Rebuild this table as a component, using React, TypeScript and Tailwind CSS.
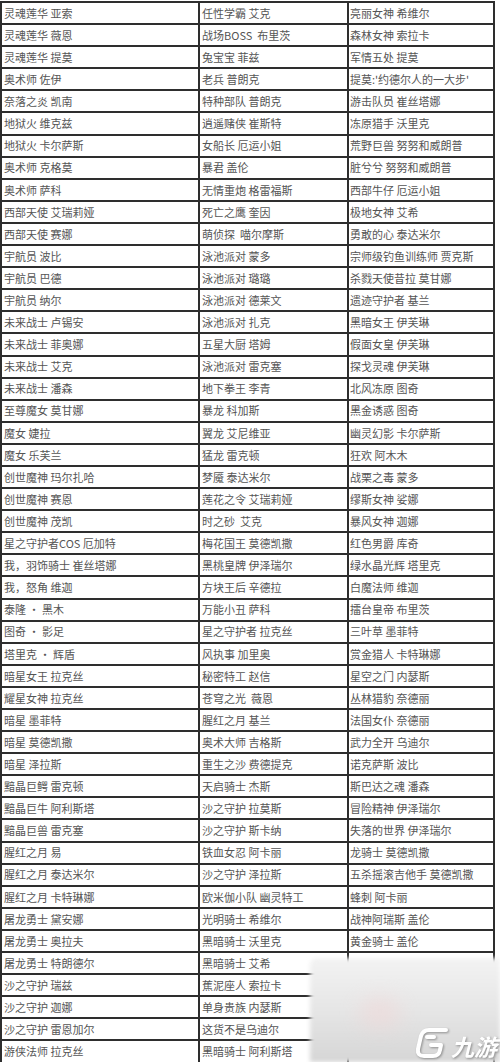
const rows: [string, string, string][] = [
  ['灵魂莲华 亚索', '任性学霸 艾克', '亮丽女神 希维尔'],
  ['灵魂莲华 薇恩', '战场BOSS  布里茨', '森林女神 索拉卡'],
  ['灵魂莲华 提莫', '兔宝宝 菲兹', '军情五处 提莫'],
  ['奥术师 佐伊', '老兵 普朗克', "提莫:'约德尔人的一大步'"],
  ['奈落之炎 凯南', '特种部队 普朗克', '游击队员 崔丝塔娜'],
  ['地狱火 维克兹', '逍遥赌侠 崔斯特', '冻原猎手 沃里克'],
  ['地狱火 卡尔萨斯', '女船长 厄运小姐', '荒野巨兽 努努和威朗普'],
  ['奥术师 克格莫', '暴君 盖伦', '脏兮兮 努努和威朗普'],
  ['奥术师 萨科', '无情重炮 格雷福斯', '西部牛仔 厄运小姐'],
  ['西部天使 艾瑞莉娅', '死亡之鹰 奎因', '极地女神 艾希'],
  ['西部天使 赛娜', '萌侦探  喵尔摩斯', '勇敢的心 泰达米尔'],
  ['宇航员 波比', '泳池派对 蒙多', '宗师级钓鱼训练师 贾克斯'],
  ['宇航员 巴德', '泳池派对 璐璐', '杀戮天使昔拉 莫甘娜'],
  ['宇航员 纳尔', '泳池派对 德莱文', '遗迹守护者 基兰'],
  ['未来战士 卢锡安', '泳池派对 扎克', '黑暗女王 伊芙琳'],
  ['未来战士 菲奥娜', '五星大厨 塔姆', '假面女皇 伊芙琳'],
  ['未来战士 艾克', '泳池派对 雷克塞', '探戈灵魂 伊芙琳'],
  ['未来战士 潘森', '地下拳王 李青', '北风冻原 图奇'],
  ['至尊魔女 莫甘娜', '暴龙 科加斯', '黑金诱惑 图奇'],
  ['魔女 婕拉', '翼龙 艾尼维亚', '幽灵幻影 卡尔萨斯'],
  ['魔女 乐芙兰', '猛龙 雷克顿', '狂欢 阿木木'],
  ['创世魔神 玛尔扎哈', '梦魇 泰达米尔', '战栗之毒 蒙多'],
  ['创世魔神 赛恩', '莲花之令 艾瑞莉娅', '缪斯女神 娑娜'],
  ['创世魔神 茂凯', '时之砂  艾克', '暴风女神 迦娜'],
  ['星之守护者COS 厄加特', '梅花国王 莫德凯撒', '红色男爵 库奇'],
  ['我，羽饰骑士 崔丝塔娜', '黑桃皇牌 伊泽瑞尔', '绿水晶光辉 塔里克'],
  ['我，怒角 维迦', '方块王后 辛德拉', '白魔法师 维迦'],
  ['泰隆 · 黑木', '万能小丑 萨科', '擂台皇帝 布里茨'],
  ['图奇 · 影足', '星之守护者 拉克丝', '三叶草 墨菲特'],
  ['塔里克 · 辉盾', '风执事 加里奥', '赏金猎人 卡特琳娜'],
  ['暗星女王 拉克丝', '秘密特工 赵信', '星空之门 内瑟斯'],
  ['耀星女神 拉克丝', '苍穹之光  薇恩', '丛林猎豹 奈德丽'],
  ['暗星 墨菲特', '腥红之月 基兰', '法国女仆 奈德丽'],
  ['暗星 莫德凯撒', '奥术大师 吉格斯', '武力全开 乌迪尔'],
  ['暗星 泽拉斯', '重生之沙 费德提克', '诺克萨斯 波比'],
  ['黯晶巨鳄 雷克顿', '天启骑士 杰斯', '斯巴达之魂 潘森'],
  ['黯晶巨牛 阿利斯塔', '沙之守护 拉莫斯', '冒险精神 伊泽瑞尔'],
  ['黯晶巨兽 雷克塞', '沙之守护 斯卡纳', '失落的世界 伊泽瑞尔'],
  ['腥红之月 易', '铁血女忍 阿卡丽', '龙骑士 莫德凯撒'],
  ['腥红之月 泰达米尔', '沙之守护 泽拉斯', '五杀摇滚吉他手 莫德凯撒'],
  ['腥红之月 卡特琳娜', '欧米伽小队 幽灵特工', '蜂刺 阿卡丽'],
  ['屠龙勇士 黛安娜', '光明骑士 希维尔', '战神阿瑞斯 盖伦'],
  ['屠龙勇士 奥拉夫', '黑暗骑士 沃里克', '黄金骑士 盖伦'],
  ['屠龙勇士 特朗德尔', '黑暗骑士 艾希', ''],
  ['沙之守护 瑞兹', '蕉泥座人 索拉卡', ''],
  ['沙之守护 迦娜', '单身贵族 内瑟斯', ''],
  ['沙之守护 雷恩加尔', '这货不是乌迪尔', ''],
  ['游侠法师 拉克丝', '黑暗骑士 阿利斯塔', ''],
]

// watermark in the bottom-right corner, sits over the table
function Watermark() {
  return (
    <div className="absolute left-[310px] top-[958px] h-[104px] w-[190px]">
      <div className="absolute inset-0 rounded-tl-[6px] bg-gradient-to-b from-[#f3f3f3] via-[#e6e6e6] to-[#d6d6d6] blur-[2px]" />
      <div className="absolute left-[50px] top-[40px] h-[30px] w-[40px] rounded-full bg-[#f0d8d8] opacity-60 blur-[10px]" />
      <div className="absolute bottom-[3px] right-[3px] flex items-end gap-[2px] drop-shadow-[1px_1px_1px_rgba(0,0,0,0.35)]">
        <svg width="34" height="32" viewBox="0 0 34 32" fill="none" stroke="#ffffff" strokeWidth="4" strokeLinejoin="round" strokeLinecap="round">
          <path d="M31 3 L14 3 Q8 3 6 9 L3 22 Q2 29 9 29 L18 29 Q24 29 25 23 L26 18 L16 18" />
          <path d="M19 10 L12 10" />
        </svg>
        <span className="pb-[1px] text-[23px] leading-none font-bold italic text-white [font-family:'Noto_Sans_CJK_SC',sans-serif]">九游</span>
      </div>
    </div>
  )
}

export default function App() {
  return (
    <div className="relative h-[1062px] w-[500px] overflow-hidden bg-white">
      <div className="mt-[1px] w-[495px] border-t-2 border-[#2e2e2e] text-[11px] text-[#555] [font-family:'Noto_Sans_CJK_SC','Liberation_Sans',sans-serif]">
        {rows.map((r, i) => (
          <div key={i} className="flex h-[22.1px] border-b-2 border-[#2e2e2e]">
            <div className="flex w-[200px] items-center border-x-2 border-[#2e2e2e] pl-[2px] whitespace-pre">{r[0]}</div>
            <div className="flex w-[149px] items-center border-r-2 border-[#2e2e2e] pl-[2px] whitespace-pre">{r[1]}</div>
            <div className="flex w-[146px] items-center border-r-2 border-[#2e2e2e] pl-[1px] whitespace-pre">{r[2]}</div>
          </div>
        ))}
      </div>
      <Watermark />
    </div>
  )
}
